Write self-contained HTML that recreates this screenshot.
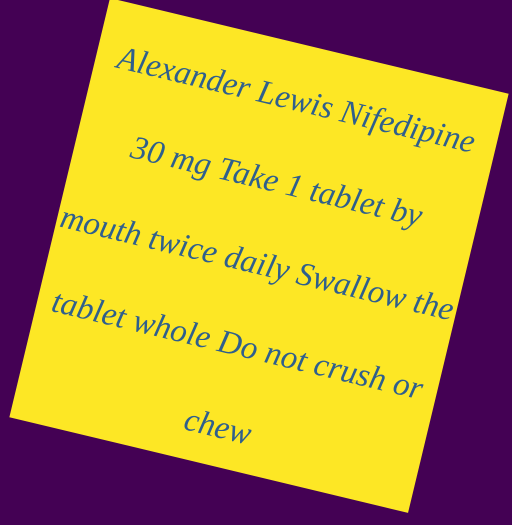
<!DOCTYPE html>
<html><head><style>
html,body{margin:0;padding:0;}
body{width:512px;height:512px;background:#440154;overflow:hidden;position:relative;}
.card{position:absolute;left:54px;top:40px;width:410px;height:431px;background:#fde725;transform:rotate(13.5deg);transform-origin:center;}
.t{position:absolute;left:-40px;right:-40px;top:14px;text-align:center;font-family:"Liberation Serif",serif;font-style:italic;font-size:33px;line-height:84px;color:#2f5f8d;white-space:nowrap;}
</style></head><body>
<div class="card"><div class="t">Alexander Lewis Nifedipine<br>30 mg Take 1 tablet by<br>mouth twice daily Swallow the<br>tablet whole Do not crush or<br>chew</div></div>
</body></html>
